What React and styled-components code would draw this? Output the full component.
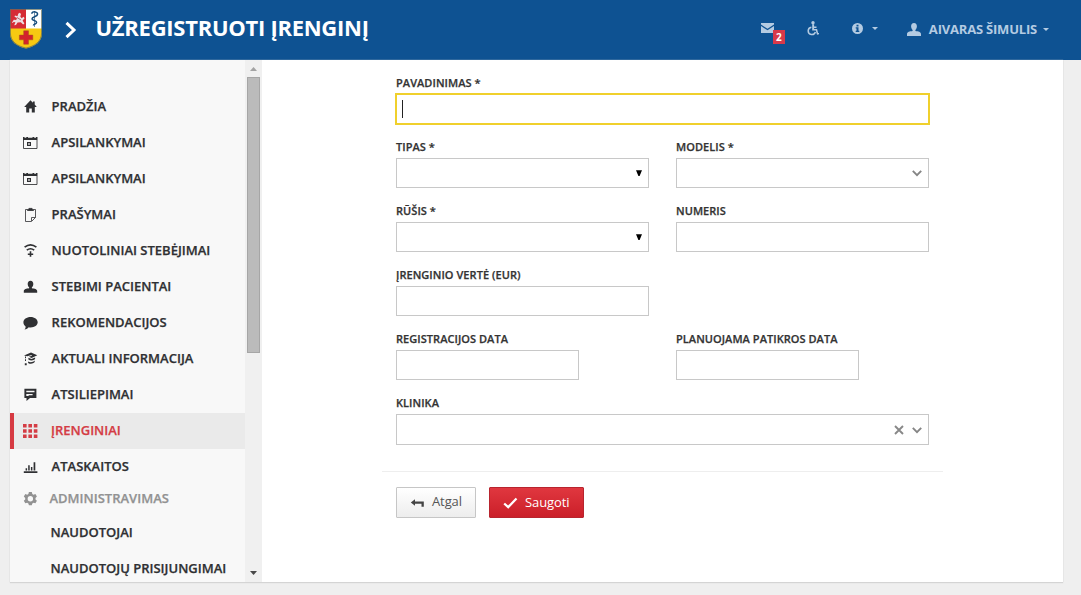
import React from "react";
import styled, { createGlobalStyle, css } from "styled-components";

const GlobalStyle = createGlobalStyle`
  *, *::before, *::after { box-sizing: border-box; }
  html, body { margin: 0; padding: 0; }
  body {
    background: #efefef;
    color: #333;
    font-family: "Open Sans", "Noto Sans", sans-serif;
    overflow: hidden;
  }
`;

const Page = styled.div`
  display: flex;
  flex-direction: column;
  height: 595px;
`;

const Header = styled.header`
  display: flex;
  align-items: center;
  flex: none;
  height: 60px;
  padding: 0 32px 0 10px;
  background: #0e5292;
  color: #b4cbe2;
`;

const Crest = styled.svg`
  width: 32px;
  height: 40px;
  flex: none;
  margin-top: -3px;
`;

const TitleChevron = styled.svg`
  width: 12px;
  height: 18px;
  margin-left: 23px;
  flex: none;
`;

const Title = styled.h1`
  flex: 1;
  margin: 0 0 6px 18.5px;
  color: #fff;
  font-size: 22px;
  line-height: 30px;
  font-weight: 700;
  letter-spacing: -0.27px;
  white-space: nowrap;
`;

const HeaderTools = styled.nav`
  display: flex;
  align-items: center;
  height: 60px;
`;

const HeaderIcon = styled.svg`
  display: block;
  flex: none;
  width: ${(p) => p.$w}px;
  height: ${(p) => p.$h}px;
  fill: currentColor;
  margin: ${(p) => p.$m || "0"};
`;

const MailButton = styled.div`
  position: relative;
  width: 24px;
  height: 22px;
  margin-right: 22px;
  padding-top: 4px;
`;

const Badge = styled.span`
  position: absolute;
  right: 0;
  bottom: -3px;
  width: 12px;
  height: 14px;
  background: #d8394a;
  color: #fff;
  font-size: 10px;
  line-height: 14px;
  font-weight: 700;
  text-align: center;
`;

const UserName = styled.span`
  margin: 0 6px 2px 8px;
  font-size: 13px;
  line-height: 18px;
  font-weight: 700;
  letter-spacing: -0.2px;
  white-space: nowrap;
`;

const Panel = styled.div`
  display: flex;
  height: 522px;
  margin: 0 18px 0 10px;
  background: #fff;
  box-shadow: 0 1px 1px #d4d4d4, 0 0 1px #d4d4d4;
`;

const Sidebar = styled.aside`
  flex: none;
  width: 235px;
  height: 522px;
  padding-top: 29px;
  overflow: hidden;
  background: #f8f8f8;
`;

const MenuItem = styled.div`
  display: flex;
  align-items: center;
  height: 36px;
  padding-left: 13px;
  font-size: 13px;
  font-weight: 600;
  -webkit-text-stroke: 0.25px currentColor;
  white-space: nowrap;
  color: #2f3033;
  ${(p) => p.$active && css`
    padding-left: 9px;
    border-left: 4px solid #d63a42;
    background: #eaeaea;
    color: #d43c44;
  `}
  ${(p) => p.$group && css`
    height: 28px;
    margin-bottom: 2px;
    color: #929292;
  `}
  ${(p) => p.$child && css`
    padding-left: 40.5px;
  `}
`;

const MenuIcon = styled.svg`
  display: block;
  flex: none;
  width: 16px;
  height: 16px;
  margin-right: ${(p) => p.$gap}px;
  fill: currentColor;
`;

const MenuText = styled.span`
  line-height: 18px;
  padding-bottom: 2px;
`;

const Scrollbar = styled.div`
  display: flex;
  flex-direction: column;
  align-items: center;
  flex: none;
  width: 17px;
  height: 522px;
  background: #f0f0f0;
`;

const ScrollArrow = styled.svg`
  display: block;
  width: 17px;
  height: 17px;
  flex: none;
  fill: ${(p) => p.$color};
`;

const ScrollThumb = styled.div`
  width: 13px;
  height: 276px;
  margin-bottom: auto;
  border: 1px solid #a6a6a6;
  background: #bbb;
`;

const Form = styled.form`
  width: 561px;
  margin-left: 120px;
  padding-top: 14px;
`;

const Fields = styled.div`
  display: grid;
  grid-template-columns: 253px 253px;
  column-gap: 27px;
  grid-auto-rows: 64px;
  padding: 0 14px;
`;

const Field = styled.div`
  grid-column: ${(p) => (p.$wide ? "1 / -1" : "auto")};
`;

const Label = styled.label`
  display: block;
  height: 20px;
  font-size: 11px;
  line-height: 18px;
  font-weight: 600;
  letter-spacing: 0.05px;
  -webkit-text-stroke: 0.25px currentColor;
  white-space: nowrap;
  color: #333;
`;

const Control = styled.div`
  display: flex;
  align-items: center;
  justify-content: flex-end;
  width: ${(p) => p.$width || "100%"};
  height: ${(p) => p.$height || 30}px;
  border: 1px solid #c8c8c8;
  background: #fff;
  ${(p) => p.$focused && css`
    justify-content: flex-start;
    padding-left: 5px;
    border-color: #f0d02c;
    box-shadow: 0 0 0 1px #f0d02c;
  `}
`;

const Caret = styled.span`
  width: 1px;
  height: 18px;
  background: #222;
`;

const ControlIcon = styled.svg`
  display: block;
  width: ${(p) => p.$w}px;
  height: ${(p) => p.$h}px;
  margin-right: ${(p) => p.$mr}px;
`;

const Actions = styled.div`
  display: flex;
  gap: 13px;
  margin-top: 13px;
  padding: 15px 14px 0;
  border-top: 1px solid #eee;
`;

const Button = styled.button`
  display: flex;
  align-items: center;
  height: 31px;
  width: ${(p) => (p.$primary ? 95 : 80)}px;
  padding: 0 0 0 13px;
  border: 1px solid ${(p) => (p.$primary ? "#b8242e" : "#c6c6c6")};
  border-radius: 1px;
  background: ${(p) =>
    p.$primary
      ? "linear-gradient(#e0373f, #cb1f29)"
      : "linear-gradient(#ffffff, #ededed)"};
  color: ${(p) => (p.$primary ? "#fff" : "#555")};
  font: 400 13px/18px "Open Sans", "Noto Sans", sans-serif;
  letter-spacing: -0.1px;
`;

const ButtonIcon = styled.svg`
  display: block;
  width: 15px;
  height: 12px;
  margin-right: 7px;
  flex: none;
`;

const ButtonText = styled.span`
  padding-bottom: ${(p) => p.$lift}px;
`;

const icons = {
  home: <path d="M7.500 1.200 1.200 8h2v5.500h3V9.600h2.600v3.900h3V8h2l-2.100-2.400V2.400H9.900v1.300z" />,
  calendar: (
    <g>
      <path d="M0 2h1.500v.8h1.800V2h1.700v.8h4.500V2h1.700v.8h1.800V2h1.500v3H0z" />
      <path d="M.5 5v8.500H14V5" fill="none" stroke="currentColor" strokeOpacity=".85" />
      <path fillRule="evenodd" d="M4 7h4v4H4zm1.200 1.200v1.600h1.600V8.200z" />
    </g>
  ),
  clipboard: (
    <g fill="none" stroke="currentColor" strokeOpacity=".8" strokeWidth="1">
      <path d="M4.500 2.500h-2v12h6l4-4v-8h-2" />
      <path d="M8.500 14v-3.500h4" />
      <path d="M4.500 3.500v-1h1.400V1.400h3.200v1.100h1.400v1z" fill="currentColor" />
    </g>
  ),
  wifi: (
    <g fill="none" stroke="currentColor" strokeWidth="1.700">
      <path d="M1.600 4.200q5.900-4.600 11.800 0" />
      <path d="M3.800 7.200q3.700-2.900 7.400 0" />
      <path d="M7.500 8.300v5.400M4.800 11.200h5.400" strokeWidth="1.600" />
    </g>
  ),
  user: (
    <path d="M7.500 1.700c1.900 0 2.800 1.400 2.800 3.200 0 1.500-.6 2.700-1.400 3.400v1c2.700.3 5.300 1 5.300 3v1.500H.8v-1.500c0-2 2.600-2.700 5.300-3v-1C5.300 7.600 4.700 6.400 4.700 4.900c0-1.800.9-3.200 2.800-3.200z" />
  ),
  comment: (
    <path d="M7.600 2c4 0 7.100 2.300 7.100 5.200s-3.100 5.200-7.100 5.200c-.7 0-1.300 0-1.900-.2-.8 1-2.200 2.300-4.300 2.400.9-.9 1.300-1.900 1.200-3.200C1.100 10.400.4 8.900.4 7.200.4 4.300 3.600 2 7.600 2z" />
  ),
  education: (
    <g>
      <path fillRule="evenodd" d="M1 4.400 8 1.600l6.300 2.600L8.600 7 5.900 5.700l3-.9-.3-.8-4.400 1.200z" />
      <path d="M5.400 6.700 8.500 8.100l3.600-1.600v1.600c-1.200 1.700-4.700 2-6.700.3z" />
      <path d="M5.100 10.400c2 1.300 4.900 1 6.600-.8v1.500c-1.700 2-4.600 2.200-6.600.8z" />
      <path d="M2 5.500h1v1.700H2zM2 8.300h1V10H2zM1.800 12.200h1.900v2H1.800z" />
    </g>
  ),
  message: (
    <path fillRule="evenodd" d="M1.400 1.800h12v9.100H7L3.500 14v-3.100H1.400zm1.900 2v1.400h8.200V3.800zm0 3.300v2h2.600l-.5-.8h4.200V7.100z" />
  ),
  grid: (
    <path d="M0 1h3.600v3.400H0zM5.400 1H9v3.400H5.400zM10.800 1h3.600v3.400h-3.600zM0 6.300h3.600v3.400H0zM5.400 6.300H9v3.400H5.400zM10.800 6.300h3.600v3.400h-3.600zM0 11.600h3.600V15H0zM5.400 11.600H9V15H5.400zM10.800 11.600h3.600V15h-3.600z" />
  ),
  chart: <path d="M.8 12.300h13.600V14H.8zM2.600 9.200h1.500v2.400H2.600zM5.200 6.300h1.500v5.300H5.200zM7.900 8h1.500v3.600H7.900zM10.600 3.300h1.700v8.300h-1.700z" />,
  gear: (
    <path fillRule="evenodd" d="M5.900 1.100h2.900l.5 1.900 1.200.7 1.900-.6 1.500 2.500-1.400 1.400v1.400l1.400 1.400-1.500 2.500-1.900-.6-1.200.7-.5 1.900H5.900l-.5-1.900-1.200-.7-1.900.6L.8 9.800l1.400-1.400V7L.8 5.600l1.500-2.500 1.900.6L5.400 3zM7.350 5a2.700 2.700 0 1 0 0 5.400 2.700 2.700 0 0 0 0-5.400z" />
  ),
};

const menu = [
  { icon: "home", text: "PRADŽIA" },
  { icon: "calendar", text: "APSILANKYMAI" },
  { icon: "calendar", text: "APSILANKYMAI" },
  { icon: "clipboard", text: "PRAŠYMAI" },
  { icon: "wifi", text: "NUOTOLINIAI STEBĖJIMAI" },
  { icon: "user", text: "STEBIMI PACIENTAI" },
  { icon: "comment", text: "REKOMENDACIJOS" },
  { icon: "education", text: "AKTUALI INFORMACIJA" },
  { icon: "message", text: "ATSILIEPIMAI" },
  { icon: "grid", text: "ĮRENGINIAI", active: true },
  { icon: "chart", text: "ATASKAITOS" },
  { icon: "gear", text: "ADMINISTRAVIMAS", group: true },
  { text: "NAUDOTOJAI", child: true },
  { text: "NAUDOTOJŲ PRISIJUNGIMAI", child: true },
];

function CrestLogo() {
  return (
    <Crest viewBox="0 0 32 40">
      <path d="M0 0h32v24c0 9-7 13.500-16 15.500C7 37.500 0 33 0 24z" fill="#f7c912" />
      <path d="M0 0h16v19.500H0z" fill="#d52b35" />
      <path d="M16 0h16v19.500H16z" fill="#fff" />
      <path d="M13.700 21.800h4.800v4.300h4.300v4.700h-4.300v4.400h-4.800v-4.400H9.400v-4.700h4.300z" fill="#d3222c" stroke="#a5521c" strokeWidth=".5" />
      <path d="M2 13.500l1.800-2.700 2.400.2.800-2-2.500-1.200.5-1.200 2.500.7.700-2.500 1.600-1 1.200 1.300-.7 2.300 1.300 1.800 2-1.500 1 1.500-2 2.300 1.800 3-1.300 1-2.300-2.200-3.200.2-1.600 2.500-1.800.3 1.200-3-1.700-.2-1.300 1z" fill="#eedfe2" />
      <path d="M7 8.500l4 2.500" stroke="#9b4c58" strokeWidth=".8" />
      <path d="M24.500 2v16" stroke="#6385a6" strokeWidth=".9" />
      <path d="M21.500 4.700c1.500-3 6.500-2 6 .8-.5 2.600-5.600 1.800-5.500 4.400.2 2 4.800 1.300 4.600 3.600-.2 1.600-3 1.400-3.200 3" fill="none" stroke="#174d7d" strokeWidth="1.500" />
      <path d="M.4.4h31.200V24c0 8.700-7 13.100-15.600 15.100C7.400 37.100.4 32.700.4 24z" fill="none" stroke="#66705c" strokeWidth=".8" />
    </Crest>
  );
}

function ChevronDown({ mr }) {
  return (
    <ControlIcon viewBox="0 0 10 8" $w={10} $h={8} $mr={mr}>
      <path d="M.8 1.900 5 6.100 9.200 1.900" fill="none" stroke="#858585" strokeWidth="1.900" />
    </ControlIcon>
  );
}

function SelectArrow() {
  return (
    <ControlIcon viewBox="0 0 6 7" $w={6} $h={7} $mr={6}>
      <path d="M0 .3h6L3.600 6H2.400z" fill="#000" />
    </ControlIcon>
  );
}

export default function App() {
  return (
    <>
      <GlobalStyle />
      <Page>
        <Header>
          <CrestLogo />
          <TitleChevron viewBox="0 0 12 18">
            <path d="M1.500 1.800 9 9l-7.500 7.200" fill="none" stroke="#fff" strokeWidth="3" />
          </TitleChevron>
          <Title>UŽREGISTRUOTI ĮRENGINĮ</Title>
          <HeaderTools>
            <MailButton>
              <HeaderIcon viewBox="0 0 13 10" $w={13} $h={10}>
                <path d="M0 0h13v1.600L6.500 5.800 0 1.600zM0 3l6.500 4.200L13 3v7H0z" />
              </HeaderIcon>
              <Badge>2</Badge>
            </MailButton>
            <HeaderIcon viewBox="0 0 12 15" $w={12} $h={15} $m="0 33px 3px 0">
              <circle cx="6" cy="1.700" r="1.700" />
              <path d="M5.200 3.300h1.900v2.200h2.400v1.400H7.100v1.200h3l1 4 .9-.2.200 1.300-2.200.5-1.200-4.100H5.200z" />
              <path d="M4.400 6.200A3.700 3.700 0 1 0 8.400 11" fill="none" stroke="currentColor" strokeWidth="1.500" />
            </HeaderIcon>
            <HeaderIcon viewBox="0 0 11 11" $w={11} $h={11} $m="0 9px 4px 0">
              <path fillRule="evenodd" d="M5.500 0a5.500 5.500 0 1 0 0 11 5.500 5.500 0 0 0 0-11zM4.500 1.700h2v1.700h-2zM3.700 4.300h2.800v3.500h.8v1.200H3.700V7.800h.8V5.500h-.8z" />
            </HeaderIcon>
            <HeaderIcon viewBox="0 0 6 3" $w={6} $h={3} $m="0 29px 3px 0">
              <path d="M0 0h6L3 3z" />
            </HeaderIcon>
            <HeaderIcon viewBox="0 0 14 13" $w={14} $h={13} $m="0 0 1px 0">
              <path d="M7 0c2 0 2.900 1.500 2.900 3.300 0 1.500-.6 2.900-1.500 3.600v1.200C11.300 8.400 14 9 14 11.200V13H0v-1.800C0 9 2.700 8.400 5.600 8.100V6.900C4.700 6.200 4.100 4.800 4.100 3.300 4.100 1.500 5 0 7 0z" />
            </HeaderIcon>
            <UserName>AIVARAS ŠIMULIS</UserName>
            <HeaderIcon viewBox="0 0 6 3" $w={6} $h={3} $m="0 0 1px 0">
              <path d="M0 0h6L3 3z" />
            </HeaderIcon>
          </HeaderTools>
        </Header>
        <Panel>
          <Sidebar>
            {menu.map((m, i) => (
              <MenuItem key={i} $active={m.active} $group={m.group} $child={m.child}>
                {m.icon && (
                  <MenuIcon viewBox="0 0 16 16" $gap={m.group ? 10.5 : m.active ? 12 : 12.6}>
                    {icons[m.icon]}
                  </MenuIcon>
                )}
                <MenuText>{m.text}</MenuText>
              </MenuItem>
            ))}
          </Sidebar>
          <Scrollbar>
            <ScrollArrow viewBox="0 0 17 17" $color="#a3a3a3">
              <path d="M5 11h7L8.500 7z" />
            </ScrollArrow>
            <ScrollThumb />
            <ScrollArrow viewBox="0 0 17 17" $color="#484848">
              <path d="M5 6h7l-3.500 4z" />
            </ScrollArrow>
          </Scrollbar>
          <Form>
            <Fields>
              <Field $wide>
                <Label>PAVADINIMAS *</Label>
                <Control $focused><Caret /></Control>
              </Field>
              <Field>
                <Label>TIPAS *</Label>
                <Control><SelectArrow /></Control>
              </Field>
              <Field>
                <Label>MODELIS *</Label>
                <Control><ChevronDown mr={6} /></Control>
              </Field>
              <Field>
                <Label>RŪŠIS *</Label>
                <Control><SelectArrow /></Control>
              </Field>
              <Field>
                <Label>NUMERIS</Label>
                <Control />
              </Field>
              <Field $wide>
                <Label>ĮRENGINIO VERTĖ (EUR)</Label>
                <Control $width="253px" />
              </Field>
              <Field>
                <Label>REGISTRACIJOS DATA</Label>
                <Control $width="183px" />
              </Field>
              <Field>
                <Label>PLANUOJAMA PATIKROS DATA</Label>
                <Control $width="183px" />
              </Field>
              <Field $wide>
                <Label>KLINIKA</Label>
                <Control $height={31}>
                  <ControlIcon viewBox="0 0 10 10" $w={10} $h={10} $mr={8}>
                    <path d="m1 1 8 8M9 1 1 9" stroke="#888" strokeWidth="1.900" />
                  </ControlIcon>
                  <ChevronDown mr={6} />
                </Control>
              </Field>
            </Fields>
            <Actions>
              <Button type="button">
                <ButtonIcon viewBox="0 0 15 12">
                  <path d="M.8 5.500 5 2.300v2.100h8.800v5.300h-2.300V6.800H5v2z" fill="#444" />
                </ButtonIcon>
                <ButtonText $lift={3}>Atgal</ButtonText>
              </Button>
              <Button type="button" $primary>
                <ButtonIcon viewBox="0 0 15 12">
                  <path d="m1.200 6.500 4 3.600L13.500 1.500" fill="none" stroke="#fff" strokeWidth="2.300" />
                </ButtonIcon>
                <ButtonText $lift={1}>Saugoti</ButtonText>
              </Button>
            </Actions>
          </Form>
        </Panel>
      </Page>
    </>
  );
}
